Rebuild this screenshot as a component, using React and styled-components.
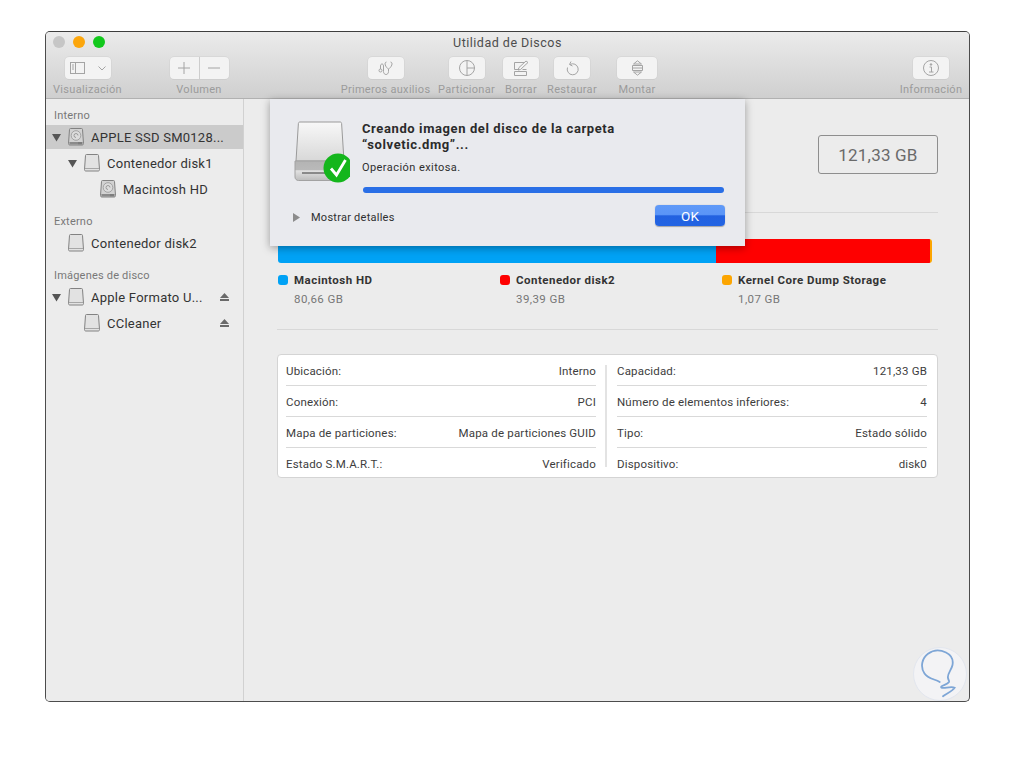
import React from 'react';
import styled, { createGlobalStyle } from 'styled-components';

const Global = createGlobalStyle`
  html, body { margin: 0; padding: 0; background: #fff; }
  body { font-family: Roboto, "Liberation Sans", sans-serif; -webkit-font-smoothing: antialiased; }
`;

const Page = styled.div`
  width: 1015px;
  height: 761px;
  padding: 31px 0 0 45px;
  box-sizing: border-box;
  position: relative;
  overflow: hidden;
`;

const Win = styled.div`
  width: 925px;
  height: 671px;
  box-sizing: border-box;
  border: 1px solid #4c4c4c;
  border-top-color: #3e3e3e;
  border-radius: 5px;
  display: flex;
  flex-direction: column;
  overflow: hidden;
  position: relative;
  background: #ececec;
`;

const Header = styled.header`
  height: 67px;
  flex: none;
  box-sizing: border-box;
  background: linear-gradient(#ebebeb, #cfcfcf);
  border-bottom: 1px solid #b1b1b1;
`;

const TitleBar = styled.div`
  height: 20px;
  display: grid;
  grid-template-columns: 1fr auto 1fr;
  align-items: center;
`;

const Lights = styled.div`
  display: flex;
  gap: 8px;
  padding-left: 7px;
`;

const Light = styled.span`
  width: 12px;
  height: 12px;
  border-radius: 50%;
  background: ${p => p.$color};
`;

const Title = styled.div`
  font-size: 12.5px;
  letter-spacing: 0.5px;
  color: #4d4d4d;
`;

const Toolbar = styled.div`
  display: flex;
  gap: 8px;
  padding: 5px 7px 0;
`;

const Tool = styled.div`
  width: ${p => p.$w}px;
  margin-left: ${p => p.$ml || 0}px;
  display: flex;
  flex-direction: column;
  align-items: center;
  gap: 4px;
  &:last-child { margin-left: auto; }
`;

const ToolBtn = styled.div`
  width: ${p => p.$w || 36}px;
  height: 22px;
  box-sizing: border-box;
  background: #f3f3f3;
  border-radius: 4px;
  box-shadow: 0 0 0 0.5px #cfcfcf, 0 0.5px 0 #c4c4c4;
  display: flex;
  align-items: center;
  justify-content: center;
  gap: ${p => p.$gap || 0}px;
`;

const Split = styled.span`
  flex: 1;
  height: 100%;
  display: flex;
  align-items: center;
  justify-content: center;
  & + & { border-left: 1px solid #cdcdcd; }
`;

const ToolLabel = styled.span`
  font-size: 11px;
  letter-spacing: 0.3px;
  color: #9b9b9b;
  white-space: nowrap;
  line-height: 14px;
`;

const Body = styled.div`
  flex: 1;
  display: flex;
  min-height: 0;
`;

const Sidebar = styled.aside`
  width: 197px;
  flex: none;
  display: flex;
  flex-direction: column;
  border-right: 1px solid #d1d1d1;
  background: #ececec;
  padding-top: 7px;
`;

const Group = styled.div`
  font-size: 11px;
  letter-spacing: 0.2px;
  color: #787878;
  height: 17px;
  padding-top: 1px;
  line-height: 18px;
  padding-left: 8px;
  margin-top: ${p => (p.$first ? 0 : 10)}px;
`;

const Row = styled.div`
  height: 24px;
  margin: 1px 0;
  display: flex;
  align-items: center;
  padding-left: ${p => 6 + p.$level * 16}px;
  padding-right: 14px;
  background: ${p => (p.$selected ? '#cbcbcb' : 'transparent')};
  font-size: 13px;
  letter-spacing: 0.25px;
  color: #333;
`;

const Arrow = styled.span`
  width: 16px;
  flex: none;
  display: flex;
`;

const RowName = styled.span`
  margin-left: 7px;
  flex: 1;
  white-space: nowrap;
`;

const Content = styled.main`
  flex: 1;
  padding: 36px 31px 0 33px;
  min-width: 0;
`;

const SizeRow = styled.div`
  display: flex;
  justify-content: flex-end;
  padding-bottom: 38px;
  border-bottom: 1px solid #d8d8d8;
`;

const SizeBox = styled.div`
  width: 120px;
  height: 39px;
  box-sizing: border-box;
  border: 1px solid #8e8e8e;
  border-radius: 3px;
  font-size: 17px;
  letter-spacing: 0.2px;
  color: #6a6a6a;
  display: flex;
  align-items: center;
  justify-content: center;
`;

const UsageBar = styled.div`
  display: flex;
  height: 24px;
  margin: 26px 6px 0 1px;
  border-radius: 3px;
  overflow: hidden;
`;

const Seg = styled.div`
  background: ${p => p.$color};
`;

const Legend = styled.div`
  display: grid;
  grid-template-columns: repeat(3, 222px);
  padding: 7px 0 0 1px;
  height: 67px;
  box-sizing: border-box;
  border-bottom: 1px solid #d8d8d8;
`;

const LegendItem = styled.div`
  display: grid;
  grid-template-columns: 16px 1fr;
  grid-auto-rows: 19px;
  align-items: center;
`;

const Dot = styled.span`
  width: 10px;
  height: 10px;
  border-radius: 3px;
  background: ${p => p.$color};
`;

const LegendName = styled.span`
  font-size: 11.5px;
  font-weight: 700;
  letter-spacing: 0.48px;
  color: #333;
`;

const LegendValue = styled.span`
  grid-column: 2;
  font-size: 11.5px;
  letter-spacing: 0.42px;
  color: #777;
`;

const InfoTable = styled.div`
  margin-top: 24px;
  background: #fff;
  border: 1px solid #d4d4d4;
  border-radius: 4px;
  display: flex;
  padding: 0 10px 0 8px;
`;

const InfoCol = styled.div`
  width: 310px;
  flex: none;
`;

const ColRule = styled.div`
  width: 2px;
  margin: 10px 10px 10px 9px;
  background: #e3e3e3;
`;

const InfoRow = styled.div`
  height: 28px;
  padding-top: 2px;
  display: flex;
  align-items: center;
  justify-content: space-between;
  font-size: 11.5px;
  letter-spacing: 0.17px;
  color: #3d3d3d;
  border-bottom: 1px solid #d9d9d9;
  &:last-child { border-bottom: none; height: 26px; padding-top: 3px; }
`;

const Dialog = styled.div`
  position: absolute;
  left: 224px;
  top: 67px;
  width: 475px;
  height: 147px;
  box-sizing: border-box;
  padding: 22px 20px 0 23px;
  background: #e9eaee;
  box-shadow: 0 2px 8px rgba(0, 0, 0, 0.35);
`;

const DialogTop = styled.div`
  display: flex;
`;

const DialogIcon = styled.div`
  width: 56px;
  flex: none;
  margin: 0 12px 0 1px;
`;

const DialogText = styled.div`
  flex: 1;
`;

const DialogTitle = styled.div`
  font-size: 13px;
  font-weight: 700;
  line-height: 16px;
  letter-spacing: 0.6px;
  color: #2b2b2b;
  white-space: nowrap;
`;

const DialogSub = styled.div`
  font-size: 11px;
  line-height: 16px;
  letter-spacing: 0.43px;
  color: #2f2f2f;
  margin-top: 7px;
`;

const Progress = styled.div`
  height: 6px;
  margin: 11px 1px 0 1px;
  border-radius: 3px;
  background: #2a6fe6;
`;

const DialogFoot = styled.div`
  display: flex;
  align-items: center;
  justify-content: space-between;
  margin-top: 12px;
`;

const Details = styled.div`
  display: flex;
  align-items: center;
  gap: 9px;
  padding-top: 4px;
  font-size: 11px;
  letter-spacing: 0.25px;
  color: #2f2f2f;
`;

const OkButton = styled.div`
  width: 70px;
  height: 21px;
  border-radius: 4px;
  background: linear-gradient(#5f99f8, #5b95f7 45%, #2261e0 52%, #2364e3);
  color: #fff;
  font-size: 13.5px;
  display: flex;
  align-items: center;
  justify-content: center;
  box-shadow: 0 0.5px 1px rgba(0, 0, 0, 0.3);
`;

const Mark = styled.svg`
  position: absolute;
  left: 913px;
  top: 647px;
`;

const line = { fill: 'none', stroke: '#a4a4a4', strokeWidth: 1 };

const SidebarIcon = () => (
  <svg width="15" height="12" viewBox="0 0 15 12" {...line}>
    <rect x="0.5" y="0.5" width="14" height="11" />
    <path d="M5.500 0.500v11M2 3h2M2 5h2M2 7h2" />
  </svg>
);
const Chevron = () => (
  <svg width="8" height="5" viewBox="0 0 8 5" {...line}>
    <path d="M0.500 0.500L4 4l3.500-3.500" />
  </svg>
);
const PlusIcon = () => (
  <svg width="12" height="12" viewBox="0 0 12 12" {...line}>
    <path d="M6 0v12M0 6h12" />
  </svg>
);
const MinusIcon = () => (
  <svg width="12" height="12" viewBox="0 0 12 12" {...line}>
    <path d="M0 6h12" />
  </svg>
);
const ScopeIcon = () => (
  <svg width="16" height="14" viewBox="0 0 16 14" {...line}>
    <circle cx="2.500" cy="9.500" r="1.500" />
    <path d="M2.500 8V5C2.500 3.500 3.300 3 4 3s1.500.5 1.500 2v5.500C5.500 12.500 6.800 13.500 8 13.500s2.500-1 2.500-3V8" />
    <path d="M8.500 1C7 1.200 6.800 2.500 7.300 4c.5 1.500 2 3.500 3.200 4c1.200-.5 2.800-2.500 3.300-4c.5-1.500.2-2.800-1.300-3" />
  </svg>
);
const PieIcon = () => (
  <svg width="16" height="16" viewBox="0 0 16 16" {...line}>
    <circle cx="8" cy="8" r="7.500" />
    <path d="M8 .5V15.500M8 8h7.500" />
  </svg>
);
const EraseIcon = () => (
  <svg width="16" height="16" viewBox="0 0 16 16" {...line}>
    <path d="M1.500 9.500V2.500h10" />
    <path d="M1.500 15.500h12v-4h-12zM1.500 9.500H6M5 10l1-2.500L13 1l2 1.500-7.500 7zM9.500 9.500h4" />
  </svg>
);
const RestoreIcon = () => (
  <svg width="13" height="15" viewBox="0 0 13 15" {...line}>
    <path d="M4 3.500a5.500 5.500 0 1 1-2.500 3M5 .5L3.500 3.500l3 1.500" />
  </svg>
);
const MountIcon = () => (
  <svg width="11" height="16" viewBox="0 0 11 16" {...line}>
    <path d="M1.500 4L5.500 .8l4 3.200zM.5 5.500h10v5H.5zM.5 8h10M1.500 12L5.500 15.200l4-3.200z" />
  </svg>
);
const InfoIcon = () => (
  <svg width="16" height="16" viewBox="0 0 16 16" {...line}>
    <circle cx="8" cy="8" r="7.500" />
    <path d="M6.500 7h2v5M6 12h4.500" />
    <circle cx="8" cy="4.500" r="0.800" fill="#a4a4a4" />
  </svg>
);

const Triangle = ({ dir = 'down', color = '#555' }) => (
  <svg width="9" height="9" viewBox="0 0 9 9">
    <path d={dir === 'down' ? 'M0 1h9L4.500 8.500z' : 'M0 0v9l7-4.500z'} fill={color} />
  </svg>
);

const Eject = () => (
  <svg width="9" height="8" viewBox="0 0 9 8">
    <path d="M4.500 0L9 5H0zM0 6h9v2H0z" fill="#6a6a6a" />
  </svg>
);

const Drive = ({ hd }) => (
  <svg width="16" height="18" viewBox="0 0 16 18">
    <path
      d="M2.500.5h11c.6 0 1 .4 1 1l1 14c0 1-.5 1.500-1.500 1.500H2c-1 0-1.500-.5-1.500-1.500l1-14c0-.6.4-1 1-1z"
      fill={hd ? '#d2d2d2' : '#e2e2e2'}
      stroke="#828282"
    />
    {hd ? (
      <>
        <circle cx="8" cy="7.500" r="4.800" fill="#dcdcdc" stroke="#959595" strokeWidth="0.800" />
        <path d="M8 9.500a2 2 0 1 1 2-2" fill="none" stroke="#8a8a8a" strokeWidth="0.800" />
        <path d="M1.500 14h13v2.500h-13z" fill="#7d7d7d" />
        <path d="M3 14v3M5 14v3M7 14v3M9 14v3" stroke="#b5b5b5" strokeWidth="0.500" />
      </>
    ) : (
      <path d="M.8 14.500h14.400" stroke="#a6a6a6" fill="none" />
    )}
  </svg>
);

const BigDrive = () => (
  <svg width="56" height="62" viewBox="0 0 56 62">
    <defs>
      <linearGradient id="driveTop" x1="0" y1="0" x2="0" y2="1">
        <stop offset="0" stopColor="#f8f8f8" />
        <stop offset="1" stopColor="#d8d8d8" />
      </linearGradient>
      <linearGradient id="driveLow" x1="0" y1="0" x2="0" y2="1">
        <stop offset="0" stopColor="#b4b4b4" />
        <stop offset="0.45" stopColor="#b9b9b9" />
        <stop offset="0.5" stopColor="#e2e2e2" />
        <stop offset="1" stopColor="#bcbcbc" />
      </linearGradient>
    </defs>
    <path d="M6 1h40c1 0 1.500.5 1.600 1.500L50 40H2L4.400 2.500C4.500 1.500 5 1 6 1z" fill="url(#driveTop)" stroke="#9a9a9a" />
    <path d="M2 40h50v16c0 2-1.500 3.500-3.500 3.500h-44C2.500 59.500 1 58 1 56V40z" fill="url(#driveLow)" stroke="#a2a2a2" />
    <path d="M8 52h24" stroke="#6f6f6f" strokeWidth="1.500" />
    <circle cx="44" cy="47" r="14.500" fill="#14b61c" />
    <path d="M37 47.500l5.500 6.500 9-15" fill="none" stroke="#fff" strokeWidth="2.800" />
  </svg>
);

const sections = [
  { group: 'Interno', first: true, items: [
    { name: 'APPLE SSD SM0128...', level: 0, arrow: true, hd: true, selected: true },
    { name: 'Contenedor disk1', level: 1, arrow: true },
    { name: 'Macintosh HD', level: 2, hd: true },
  ] },
  { group: 'Externo', items: [{ name: 'Contenedor disk2', level: 0 }] },
  { group: 'Imágenes de disco', items: [
    { name: 'Apple Formato U...', level: 0, arrow: true, eject: true },
    { name: 'CCleaner', level: 1, eject: true },
  ] },
];

const infoLeft = [
  ['Ubicación:', 'Interno'],
  ['Conexión:', 'PCI'],
  ['Mapa de particiones:', 'Mapa de particiones GUID'],
  ['Estado S.M.A.R.T.:', 'Verificado'],
];
const infoRight = [
  ['Capacidad:', '121,33 GB'],
  ['Número de elementos inferiores:', '4'],
  ['Tipo:', 'Estado sólido'],
  ['Dispositivo:', 'disk0'],
];

const legend = [
  { color: '#00a2f5', name: 'Macintosh HD', value: '80,66 GB' },
  { color: '#fe0000', name: 'Contenedor disk2', value: '39,39 GB' },
  { color: '#fca500', name: 'Kernel Core Dump Storage', value: '1,07 GB' },
];

export default function App() {
  return (
    <Page>
      <Global />
      <Win>
        <Header>
          <TitleBar>
            <Lights>
              <Light $color="#c6c6c6" />
              <Light $color="#fca60c" />
              <Light $color="#12c81c" />
            </Lights>
            <Title>Utilidad de Discos</Title>
            <span />
          </TitleBar>
          <Toolbar>
            <Tool $w={69}>
              <ToolBtn $w={46} $gap={13}><SidebarIcon /><Chevron /></ToolBtn>
              <ToolLabel>Visualización</ToolLabel>
            </Tool>
            <Tool $w={60} $ml={39}>
              <ToolBtn $w={59}>
                <Split><PlusIcon /></Split>
                <Split><MinusIcon /></Split>
              </ToolBtn>
              <ToolLabel>Volumen</ToolLabel>
            </Tool>
            <Tool $w={89} $ml={104}>
              <ToolBtn><ScopeIcon /></ToolBtn>
              <ToolLabel>Primeros auxilios</ToolLabel>
            </Tool>
            <Tool $w={57}>
              <ToolBtn><PieIcon /></ToolBtn>
              <ToolLabel>Particionar</ToolLabel>
            </Tool>
            <Tool $w={36}>
              <ToolBtn><EraseIcon /></ToolBtn>
              <ToolLabel>Borrar</ToolLabel>
            </Tool>
            <Tool $w={50}>
              <ToolBtn><RestoreIcon /></ToolBtn>
              <ToolLabel>Restaurar</ToolLabel>
            </Tool>
            <Tool $w={40} $ml={12}>
              <ToolBtn $w={40}><MountIcon /></ToolBtn>
              <ToolLabel>Montar</ToolLabel>
            </Tool>
            <Tool $w={62}>
              <ToolBtn><InfoIcon /></ToolBtn>
              <ToolLabel>Información</ToolLabel>
            </Tool>
          </Toolbar>
        </Header>
        <Body>
          <Sidebar>
            {sections.map(sec => (
              <React.Fragment key={sec.group}>
                <Group $first={sec.first}>{sec.group}</Group>
                {sec.items.map(it => (
                  <Row key={it.name} $level={it.level} $selected={it.selected}>
                    <Arrow>{it.arrow && <Triangle />}</Arrow>
                    <Drive hd={it.hd} />
                    <RowName>{it.name}</RowName>
                    {it.eject && <Eject />}
                  </Row>
                ))}
              </React.Fragment>
            ))}
          </Sidebar>
          <Content>
            <SizeRow>
              <SizeBox>121,33 GB</SizeBox>
            </SizeRow>
            <UsageBar>
              <Seg $color="#00a2f5" style={{ width: 438 }} />
              <Seg $color="#fe0000" style={{ width: 214 }} />
              <Seg $color="#fca500" style={{ width: 2 }} />
            </UsageBar>
            <Legend>
              {legend.map(l => (
                <LegendItem key={l.name}>
                  <Dot $color={l.color} />
                  <LegendName>{l.name}</LegendName>
                  <LegendValue>{l.value}</LegendValue>
                </LegendItem>
              ))}
            </Legend>
            <InfoTable>
              <InfoCol>
                {infoLeft.map(r => (
                  <InfoRow key={r[0]}><span>{r[0]}</span><span>{r[1]}</span></InfoRow>
                ))}
              </InfoCol>
              <ColRule />
              <InfoCol>
                {infoRight.map(r => (
                  <InfoRow key={r[0]}><span>{r[0]}</span><span>{r[1]}</span></InfoRow>
                ))}
              </InfoCol>
            </InfoTable>
          </Content>
        </Body>
        <Dialog>
          <DialogTop>
            <DialogIcon><BigDrive /></DialogIcon>
            <DialogText>
              <DialogTitle>Creando imagen del disco de la carpeta<br />“solvetic.dmg”...</DialogTitle>
              <DialogSub>Operación exitosa.</DialogSub>
              <Progress />
            </DialogText>
          </DialogTop>
          <DialogFoot>
            <Details><Triangle dir="right" color="#8c8c8c" />Mostrar detalles</Details>
            <OkButton>OK</OkButton>
          </DialogFoot>
        </Dialog>
      </Win>
      <Mark width="54" height="54" viewBox="0 0 54 54">
        <circle cx="27" cy="27" r="26.500" fill="#f3f3f5" stroke="#e2e6ee" />
        <path
          d="M26.700 35C22 32 15 32 11.500 26.500C7 20 9 11 15 6.700C20 3 27 2.500 33 5.500C38 8 40.500 12.500 39.500 18C38.500 23 34 27 35 31C35.500 33.500 36.500 34 36 35C34 38 27 38.500 28.300 40.500C30 42 38 39 41.700 40.700C40 44 33 47 30 49.300"
          fill="none"
          stroke="#7ea6d6"
          strokeWidth="1.800"
          strokeLinecap="round"
        />
      </Mark>
    </Page>
  );
}
